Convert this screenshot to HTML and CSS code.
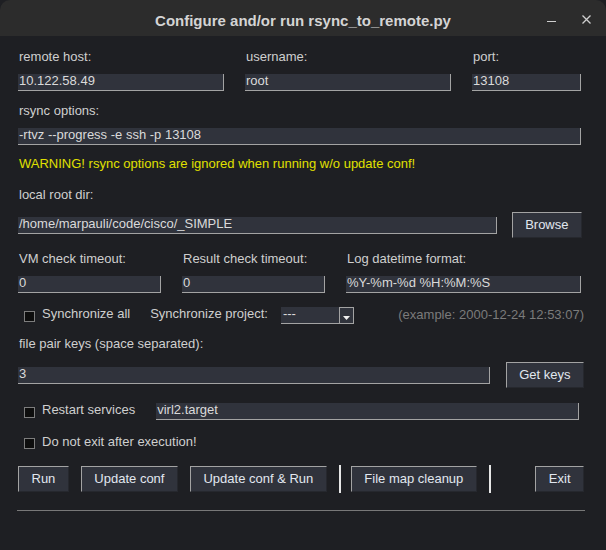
FILE: index.html
```html
<!DOCTYPE html>
<html>
<head>
<meta charset="utf-8">
<title>Configure and/or run rsync_to_remote.py</title>
<link rel="stylesheet" href="styles.css">
</head>
<body>
<div class="window">
  <header class="titlebar">
    <span class="title">Configure and/or run rsync_to_remote.py</span>
    <div class="wm-controls">
      <span class="wm-min"></span>
      <svg class="wm-close" width="9" height="9" viewBox="0 0 9 9"><path d="M0.5 0.5 L8.5 8.5 M8.5 0.5 L0.5 8.5" stroke="#cfcfcf" stroke-width="1.3" fill="none"/></svg>
    </div>
  </header>

  <main class="content">
    <div class="grid-hosts">
      <div class="field"><div class="label">remote host:</div><div class="entry">10.122.58.49</div></div>
      <div class="field"><div class="label">username:</div><div class="entry">root</div></div>
      <div class="field"><div class="label">port:</div><div class="entry">13108</div></div>
    </div>

    <div class="label gap-12">rsync options:</div>
    <div class="entry entry-wide gap-10">-rtvz --progress -e ssh -p 13108</div>

    <div class="warning">WARNING! rsync options are ignored when running w/o update conf!</div>

    <div class="label gap-16">local root dir:</div>
    <div class="row-entry-btn gap-10">
      <div class="entry entry-path">/home/marpauli/code/cisco/_SIMPLE</div>
      <div class="btn btn-browse">Browse</div>
    </div>

    <div class="grid-timeouts">
      <div class="field"><div class="label">VM check timeout:</div><div class="entry">0</div></div>
      <div class="field"><div class="label">Result check timeout:</div><div class="entry">0</div></div>
      <div class="field"><div class="label">Log datetime format:</div><div class="entry">%Y-%m-%d %H:%M:%S</div></div>
    </div>

    <div class="row-sync">
      <span class="checkbox"></span>
      <span class="check-label">Synchronize all</span>
      <span class="sync-project">Synchronize project:</span>
      <div class="combo">
        <span class="combo-text">---</span>
        <span class="combo-arrow"><svg width="7" height="4" viewBox="0 0 7 4"><path d="M0 0 H7 L3.5 4 Z" fill="#f0f0f0"/></svg></span>
      </div>
      <span class="example">(example: 2000-12-24 12:53:07)</span>
    </div>

    <div class="label gap-12">file pair keys (space separated):</div>
    <div class="row-entry-btn gap-11">
      <div class="entry entry-keys">3</div>
      <div class="btn btn-keys">Get keys</div>
    </div>

    <div class="row-restart">
      <span class="checkbox"></span>
      <span class="check-label">Restart services</span>
      <div class="entry entry-services">virl2.target</div>
    </div>

    <div class="row-noexit">
      <span class="checkbox"></span>
      <span class="check-label">Do not exit after execution!</span>
    </div>

    <div class="row-buttons">
      <div class="btn">Run</div>
      <div class="btn">Update conf</div>
      <div class="btn">Update conf &amp; Run</div>
      <span class="vsep"></span>
      <div class="btn">File map cleanup</div>
      <span class="vsep vsep-last"></span>
      <div class="btn btn-exit">Exit</div>
    </div>

    <div class="hline"></div>
  </main>
</div>
</body>
</html>
```

FILE: styles.css
```css
* {
  box-sizing: border-box;
  margin: 0;
  padding: 0;
}

html, body {
  width: 606px;
  height: 550px;
  overflow: hidden;
  background: #1e1f23;
}

body {
  font-family: "Liberation Sans", Arial, sans-serif;
  font-size: 13px;
  line-height: 15px;
  color: #cfcfcf;
}

.window {
  width: 606px;
  height: 550px;
  background: #1e1f23;
}

/* ---------- title bar ---------- */
.titlebar {
  height: 36px;
  padding-top: 5px;
  background: #2c2c2c;
  border-radius: 10px 10px 0 0;
  display: grid;
  grid-template-columns: 1fr auto 1fr;
  align-items: center;
}

.title {
  grid-column: 2;
  font-family: "Liberation Sans", Arial, sans-serif;
  font-weight: bold;
  font-size: 15px;
  line-height: 17px;
  color: #d4d4d4;
  white-space: nowrap;
}

.wm-controls {
  grid-column: 3;
  justify-self: end;
  display: flex;
  align-items: center;
  padding-right: 15px;
  height: 20px;
}

.wm-min {
  width: 9px;
  height: 1px;
  background: #cfcfcf;
  margin-top: 2px;
  margin-right: 26px;
}

.wm-close {
  display: block;
  margin-top: -3px;
}

/* ---------- content ---------- */
.content {
  padding: 13px 22px 0 18px;
}

.label {
  padding-left: 1px;
  white-space: nowrap;
}

.field .entry {
  margin-top: 10px;
}

.entry {
  height: 17px;
  background: #30333c;
  border-right: 1px solid #a3a3a3;
  border-bottom: 1px solid #a3a3a3;
  padding-left: 1px;
  line-height: 14px;
  color: #dadada;
  white-space: nowrap;
  overflow: hidden;
}

.gap-10 { margin-top: 10px; }
.gap-11 { margin-top: 11px; }
.gap-12 { margin-top: 12px; }
.gap-16 { margin-top: 16px; }

.grid-hosts {
  display: grid;
  grid-template-columns: 206px 206px 109px;
  column-gap: 21px;
}

.entry-wide {
  margin-right: 3px;
}

.warning {
  margin-top: 11px;
  padding-left: 1px;
  color: #e0e000;
}

.row-entry-btn {
  display: flex;
  align-items: center;
}

.entry-path {
  width: 479px;
}

.btn {
  height: 26px;
  padding: 0 12.5px;
  background: #30333c;
  border-top: 1px solid #a3a3a3;
  border-left: 1px solid #a3a3a3;
  border-right: 1px solid #26282e;
  border-bottom: 1px solid #26282e;
  color: #e1e7ef;
  line-height: 23px;
  white-space: nowrap;
}

.btn-browse {
  margin-left: auto;
  margin-right: 2px;
}

.grid-timeouts {
  margin-top: 13px;
  display: grid;
  grid-template-columns: 143px 143px 235px;
  column-gap: 21px;
}

/* ---------- checkbox rows ---------- */
.checkbox {
  flex: none;
  width: 11px;
  height: 11px;
  background: #0d0d0d;
  border: 1px solid #7d7d7d;
  margin-left: 6px;
  margin-right: 7px;
}

.check-label {
  white-space: nowrap;
}

.row-sync {
  margin-top: 13px;
  display: flex;
  align-items: flex-start;
}

.row-sync .checkbox {
  margin-top: 5px;
}

.sync-project {
  margin-left: 20px;
  white-space: nowrap;
}

.combo {
  margin-top: 1px;
  margin-left: 13px;
  width: 73px;
  height: 17px;
  display: flex;
}

.combo-text {
  flex: 1;
  background: #30333c;
  border-bottom: 1px solid #a3a3a3;
  padding-left: 2px;
  line-height: 14px;
  color: #dadada;
}

.combo-arrow {
  width: 15px;
  height: 17px;
  background: #30333c;
  border: 1px solid #a3a3a3;
  display: flex;
  align-items: flex-end;
  justify-content: center;
  padding-bottom: 3px;
}

.combo-arrow svg {
  display: block;
}

.example {
  margin-left: auto;
  margin-top: 1px;
  color: #7b7b7b;
  white-space: nowrap;
}

.entry-keys {
  width: 472px;
}

.btn-keys {
  margin-left: auto;
}

.row-restart {
  margin-top: 14px;
  display: flex;
  align-items: flex-start;
}

.row-restart .checkbox {
  margin-top: 5px;
}

.entry-services {
  flex: 1;
  margin-top: 1px;
  margin-left: 21px;
  margin-right: 5px;
}

.row-noexit {
  margin-top: 14px;
  display: flex;
  align-items: flex-start;
}

.row-noexit .checkbox {
  margin-top: 4px;
}

/* ---------- buttons ---------- */
.row-buttons {
  margin-top: 16px;
  display: flex;
  align-items: center;
  gap: 12px;
}

.vsep {
  width: 2px;
  height: 28px;
  background: #e6e6e6;
  margin-right: -2px;
}

.vsep-last {
  margin-right: 0;
}

.btn-exit {
  margin-left: auto;
}

.hline {
  margin-top: 17px;
  margin-left: -1px;
  margin-right: -1px;
  height: 1px;
  background: #787878;
}
```
